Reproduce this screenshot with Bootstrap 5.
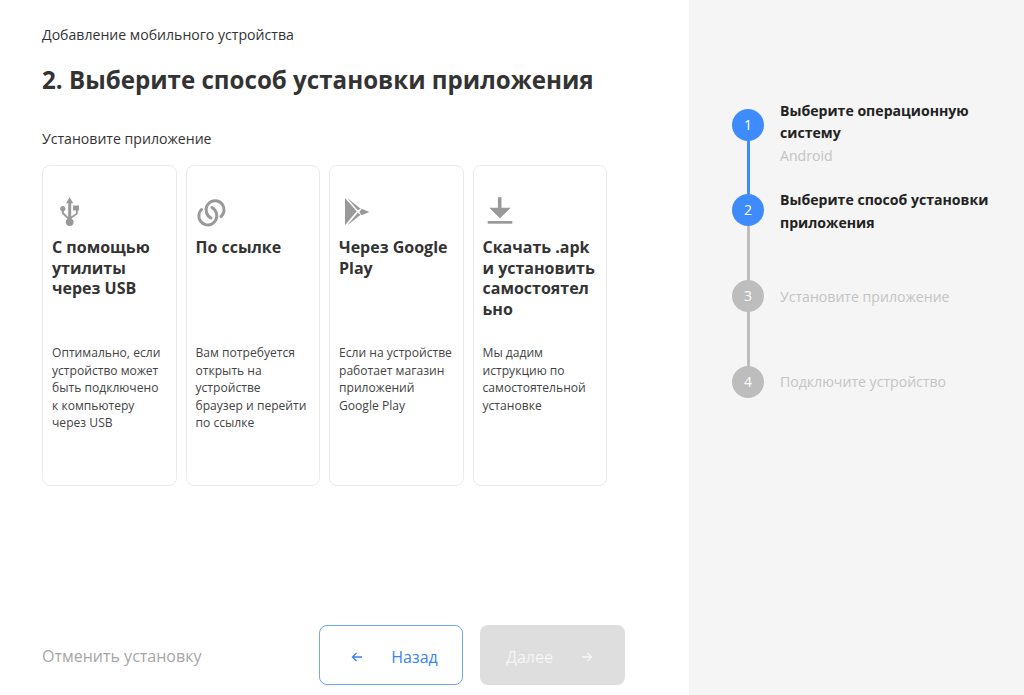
<!DOCTYPE html>
<html lang="ru">
<head>
<meta charset="utf-8">
<title>Добавление мобильного устройства</title>
<link rel="stylesheet" href="https://cdn.jsdelivr.net/npm/bootstrap@5.3.0/dist/css/bootstrap.min.css">
<style>
html,body{height:100%;overflow:hidden}
body{font-family:"Open Sans","Noto Sans",sans-serif;color:#333;background:#fff}
.shell{height:695px}
.main-pane{width:689px;padding:25px 0 10px 42px}
.side-pane{width:335px;background:#f5f5f5;padding:100px 20px 0 43px}
.crumb{font-size:14.1px;line-height:20px;color:#333}
.page-title{font-size:24.13px;font-weight:700;line-height:33px;margin:18px 0 0;color:#333}
.sub-title{font-size:14.1px;line-height:20px;margin:33px 0 0;color:#333}
.cards-row{margin-top:16px;gap:9px;width:566px}
.opt-card{width:134.5px;height:321px;flex:0 0 auto;border:1px solid #ebebeb;border-radius:8px;padding:29px 10px 0 9px;background:#fff}
.opt-icon{height:36px;display:block}
.opt-title{font-size:16px;font-weight:700;line-height:20.5px;color:#333;height:105px;margin:6px 0 0;overflow-wrap:anywhere}
.opt-text{font-size:12.1px;line-height:17.5px;color:#444;margin:2px 0 0}
.foot-row{margin-top:auto;width:583px}
.cancel-link{font-size:16px;color:#a6a6a6;text-decoration:none;line-height:20px;padding-top:2px}
.btn-wide{height:60px;font-size:16px;font-weight:500;border-radius:8px;gap:28px}
.btn-back{width:144px;border:1px solid #6ea6ff;color:#3b82f6;background:#fff;padding:4px 0 0 7px}
.btn-next{width:145px;border:0;background:#dedede;color:#f5f5f5;margin-left:17px;padding:4px 6px 0 0}
.step{min-height:85.8px}
.marker{width:32px;flex:0 0 32px;padding-top:8.5px;margin-bottom:-8.5px;margin-right:16px}
.dot{width:32px;height:32px;border-radius:50%;font-size:14px;line-height:32px;text-align:center;color:#fff;background:#bdbdbd;flex:0 0 32px}
.dot.on{background:#3d8bfd}
.wire{width:3px;flex:1 1 auto;background:#bdbdbd}
.wire.on{background:#3d8bfd}
.step-name{font-size:14.1px;line-height:22.4px;font-weight:700;color:#222}
.step-name.lowered{padding-top:2px;line-height:23.4px}
.step-name.off{font-weight:400;color:#c4c4c4;padding-top:14px}
.step-sub{font-size:14.1px;line-height:22.4px;color:#c4c4c4}
</style>
</head>
<body>
<div class="shell d-flex">
  <div class="main-pane d-flex flex-column">
    <div class="crumb">Добавление мобильного устройства</div>
    <h1 class="page-title">2. Выберите способ установки приложения</h1>
    <p class="sub-title">Установите приложение</p>
    <div class="cards-row d-flex">
      <div class="opt-card">
        <svg class="opt-icon" width="36" height="36" viewBox="0 0 36 36" fill="#999">
          <path d="M17.6 2.3 21.3 8.3H19.2V21.6L24 18.2V15.6H21V10.6H27V15.6H25.8V19.1L19.2 23.8V23.4A4 4 0 1 1 16.2 23.4V24.6L9.8 18.6V16.3A2.7 2.7 0 1 1 11.8 16.3V17.8L16.2 21.9V8.3H14Z"/>
        </svg>
        <div class="opt-title">С помощью утилиты через USB</div>
        <p class="opt-text">Оптимально, если устройство может быть подключено к компьютеру через USB</p>
      </div>
      <div class="opt-card">
        <svg class="opt-icon" width="36" height="36" viewBox="0 0 36 36" fill="none" stroke="#999" stroke-width="3" stroke-linecap="round">
          <path d="M27 21.5A9 9 0 1 0 12.5 17.5Q13.5 21 17 23" transform="translate(-2 0)"/>
          <path d="M7.5 14.5A9 9 0 1 0 22.5 18.5Q21.5 14.5 18 12.5" transform="translate(-2 0)"/>
        </svg>
        <div class="opt-title">По ссылке</div>
        <p class="opt-text">Вам потребуется открыть на устройстве браузер и перейти по ссылке</p>
      </div>
      <div class="opt-card">
        <svg class="opt-icon" width="36" height="36" viewBox="0 0 36 36" fill="#999">
          <path d="M6 3V30.3L17.7 16.3Z"/><path d="M8.3 3 21.7 13.7 18.7 15.3Z"/><path d="M8.3 30.3 21.7 19.7 18.7 17.7Z"/><path d="M22.7 13.7 30.3 17 22.7 20.3 20.3 17Z"/>
        </svg>
        <div class="opt-title">Через Google Play</div>
        <p class="opt-text">Если на устройстве работает магазин приложений Google Play</p>
      </div>
      <div class="opt-card">
        <svg class="opt-icon" width="36" height="36" viewBox="0 0 36 36" fill="#999">
          <path d="M14.9 2.3H18.5V12.7H27.7L16.9 23.3 6.3 12.7H14.9Z"/><rect x="4.7" y="26" width="24.6" height="2.7"/>
        </svg>
        <div class="opt-title">Скачать .apk и установить самостоятельно</div>
        <p class="opt-text">Мы дадим иструкцию по самостоятельной установке</p>
      </div>
    </div>
    <div class="foot-row d-flex align-items-center">
      <a class="cancel-link flex-grow-1" href="#">Отменить установку</a>
      <button type="button" class="btn btn-wide btn-back d-flex align-items-center justify-content-center">
        <svg width="12" height="12" viewBox="0 0 12 12" fill="none" stroke="currentColor" stroke-width="1.4"><path d="M11 6H1.5M5.5 2 1.5 6 5.5 10"/></svg>
        <span>Назад</span>
      </button>
      <button type="button" class="btn btn-wide btn-next d-flex align-items-center justify-content-center">
        <span>Далее</span>
        <svg width="12" height="12" viewBox="0 0 12 12" fill="none" stroke="currentColor" stroke-width="1.4"><path d="M1 6H10.5M6.5 2 10.5 6 6.5 10"/></svg>
      </button>
    </div>
  </div>
  <div class="side-pane">
    <div class="step d-flex">
      <div class="marker d-flex flex-column align-items-center"><div class="dot on">1</div><div class="wire on"></div></div>
      <div><div class="step-name">Выберите операционную систему</div><div class="step-sub">Android</div></div>
    </div>
    <div class="step d-flex">
      <div class="marker d-flex flex-column align-items-center"><div class="dot on">2</div><div class="wire"></div></div>
      <div><div class="step-name lowered">Выберите способ установки приложения</div></div>
    </div>
    <div class="step d-flex">
      <div class="marker d-flex flex-column align-items-center"><div class="dot">3</div><div class="wire"></div></div>
      <div><div class="step-name off">Установите приложение</div></div>
    </div>
    <div class="step d-flex">
      <div class="marker d-flex flex-column align-items-center"><div class="dot">4</div></div>
      <div><div class="step-name off">Подключите устройство</div></div>
    </div>
  </div>
</div>
<script src="https://cdn.jsdelivr.net/npm/bootstrap@5.3.0/dist/js/bootstrap.bundle.min.js"></script>
</body>
</html>
